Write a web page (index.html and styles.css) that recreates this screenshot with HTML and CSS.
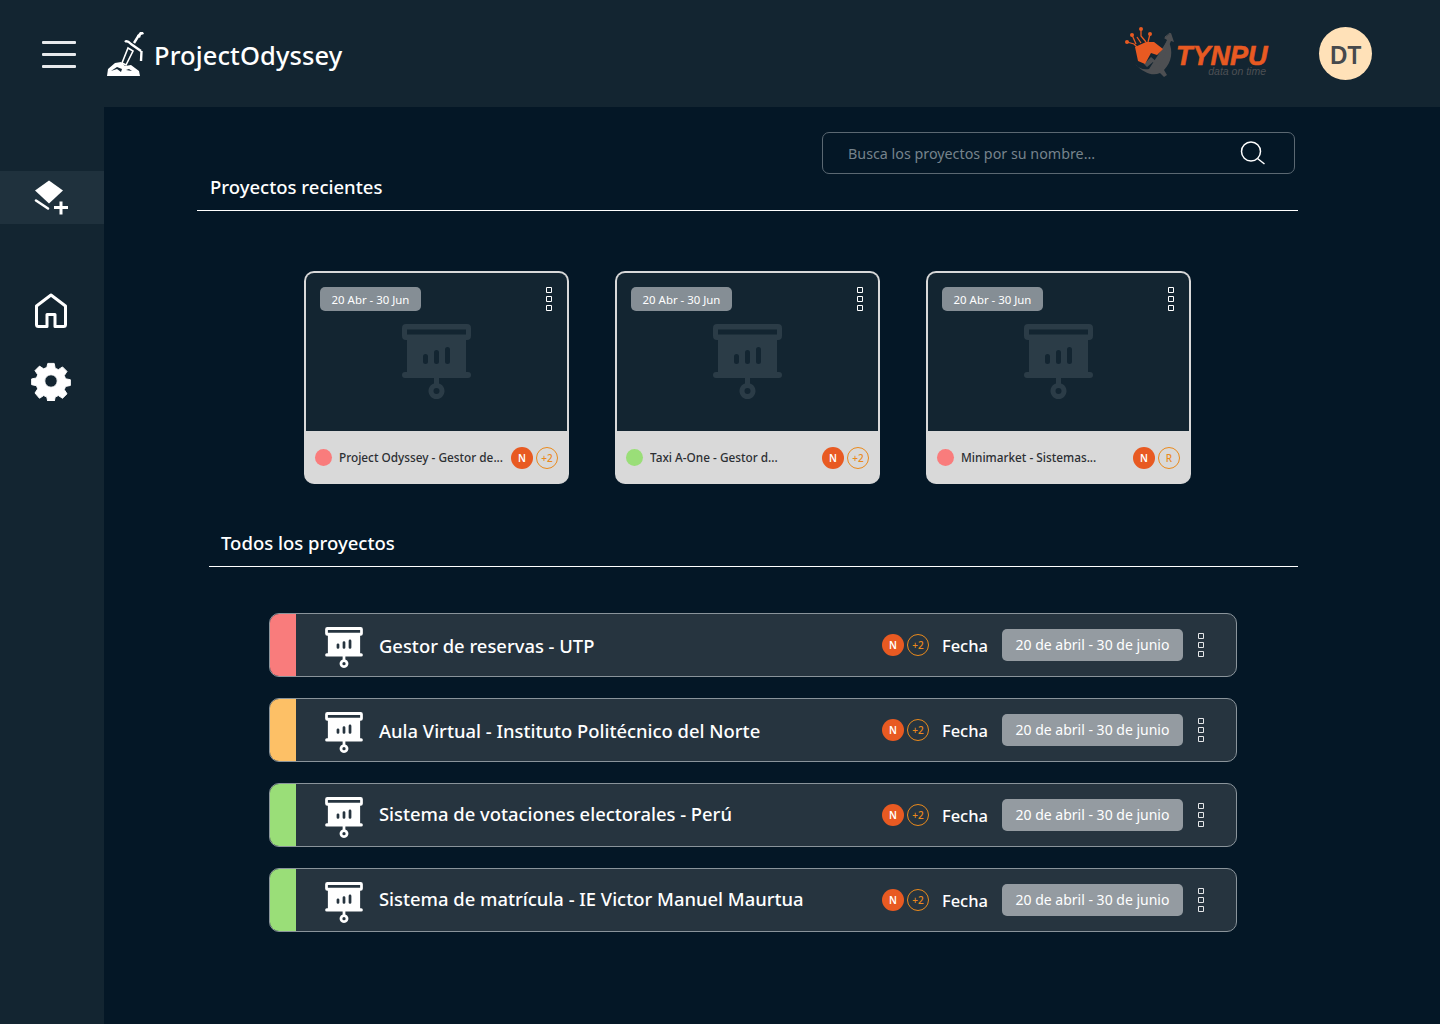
FILE: index.html
```html
<!DOCTYPE html>
<html lang="es">

<head>
    <meta charset="UTF-8">
    <meta name="viewport" content="width=device-width, initial-scale=1.0">
    <title>ProjectOdyssey</title>
    <link rel="stylesheet" href="styles.css">
</head>

<body>
    <svg class="defs" width="0" height="0">
        <defs>
            <symbol id="board" viewBox="0 0 69 75">
                <path fill-rule="evenodd" d="M4 0h61a4 4 0 0 1 4 4v8a4 4 0 0 1-4 4h-1v32h2a3 3 0 0 1 0 6H37v5.400a8 8 0 1 1-5 0V54H3a3 3 0 0 1 0-6h2V16H4a4 4 0 0 1-4-4V4a4 4 0 0 1 4-4zM5 5.500v5h59v-5zM34.500 64a3 3 0 1 0 0 6 3 3 0 0 0 0-6zM23.500 30a2.500 2.500 0 0 0-2.500 2.500v5a2.500 2.500 0 0 0 5 0v-5a2.500 2.500 0 0 0-2.500-2.500zM34.500 26a2.500 2.500 0 0 0-2.500 2.500v9a2.500 2.500 0 0 0 5 0v-9a2.500 2.500 0 0 0-2.500-2.500zM45.500 23a2.500 2.500 0 0 0-2.500 2.500v12a2.500 2.500 0 0 0 5 0v-12a2.500 2.500 0 0 0-2.500-2.500z"/>
            </symbol>
            <symbol id="dots" viewBox="0 0 6 24">
                <path fill="none" stroke="currentColor" d="M.5.500h5v5h-5zM.5 9.500h5v5h-5zM.5 18.500h5v5h-5z"/>
            </symbol>
        </defs>
    </svg>

    <header class="topbar">
        <div class="menu-btn"><span></span><span></span><span></span></div>
        <svg class="brand-icon" width="38" height="45" viewBox="5 7 38 45">
            <path fill="#fff" d="M6 51l1-7 7-6 6-1 4 4 6-1 8 6 1 5zM10 46l6-2 4 3 1-3-5-2zM25 45l6 1-3-2z" fill-rule="evenodd"/>
            <path fill="none" stroke="#fff" stroke-width="1.600" d="M27 23l5 3-7 14-4-2z"/>
            <path fill="none" stroke="#132531" stroke-width="1" d="M28 27l-4 9"/>
            <path fill="none" stroke="#fff" stroke-width="2.400" d="M24 17c2-2 4 0 6 2l10 7M33 18l5-8M40.500 26l-.5 10"/>
            <path fill="#fff" d="M36 11l3-4h3l1 2-3 1-1 3z"/>
        </svg>
        <span class="brand-name">ProjectOdyssey</span>
        <div class="tynpu">
            <svg width="56" height="60" viewBox="0 0 56 60">
                <path fill="#4d4f52" d="M15 42c3 4 8 6 14 5l18-28 3 1-1 0c4 9 3 20-5 28l3 5-3 2-4-4c-7 3-15 1-25-9z"/>
                <path fill="#4d4f52" d="M24 42l7-7 6 5 10-22-3-2 7-5 3 9-3-1-12 26-6-5-6 5z"/>
                <path fill="none" stroke="#4d4f52" d="M45 15l5-4 2 8"/>
                <path fill="#e85a22" d="M15 25l11-5h8l9 7-6 6-6-2-6 11-7-3z"/>
                <path fill="none" stroke="#e85a22" stroke-width="1.300" d="M7 20l7 2 4 4M12 13l4 9M21 7v7l5 6M30 12l-2 8M17 15l4 6"/>
                <circle fill="#e85a22" cx="7" cy="20" r="2"/>
                <circle fill="#e85a22" cx="12" cy="13" r="2"/>
                <circle fill="#e85a22" cx="21" cy="7" r="2"/>
                <circle fill="#e85a22" cx="30" cy="12" r="2"/>
            </svg>
            <div class="tynpu-text">
                <strong>TYNPU</strong>
                <small>data on time</small>
            </div>
        </div>
        <div class="avatar">DT</div>
    </header>

    <div class="layout">
        <nav class="sidebar">
            <div class="nav-item nav-new">
                <svg width="36" height="36" viewBox="0 0 36 36">
                    <path fill="#fff" d="M16 .5l14 10-14 13-14-13z"/>
                    <path fill="none" stroke="#fff" stroke-width="2.600" stroke-linecap="round" d="M3 20.500l12 8"/>
                    <path fill="none" stroke="#fff" stroke-width="3" d="M28 21.500v13M21 27.500h14"/>
                </svg>
            </div>
            <div class="nav-item nav-home">
                <svg width="34" height="37" viewBox="0 0 34 37">
                    <path fill="none" stroke="#fff" stroke-width="3" stroke-linejoin="round" d="M2.500 14L17 3l14.500 11v18.500a2 2 0 0 1-2 2H21V22.500h-8v12H4.500a2 2 0 0 1-2-2z"/>
                </svg>
            </div>
            <div class="nav-item nav-gear">
                <svg width="40" height="40" viewBox="-.5 -.5 25 25">
                    <path fill="#fff" stroke="#fff" stroke-width=".6" stroke-linejoin="round" fill-rule="evenodd" d="M10 1h4l.6 3 2 .9 2.600-1.700 2.800 2.800-1.700 2.600.8 2 3 .6v3.600l-3 .6-.8 2 1.700 2.600-2.800 2.800-2.600-1.700-2 .9-.6 3h-4l-.6-3-2-.9-2.600 1.700L2 19.500l1.700-2.600-.8-2-3-.6v-3.600l3-.6.8-2L2 5.500 4.800 2.700l2.600 1.700 2-.9zM12 8.100a3.900 3.900 0 1 0 0 7.800 3.900 3.900 0 0 0 0-7.800z"/>
                </svg>
            </div>
        </nav>

        <main class="content">
            <div class="search">
                <span>Busca los proyectos por su nombre...</span>
                <svg width="26" height="24" viewBox="0 0 26 24">
                    <circle cx="11" cy="10.500" r="9.500" fill="none" stroke="#fff" stroke-width="1.500"/>
                    <path stroke="#fff" stroke-width="1.500" d="M17.500 17.500l7 5.500"/>
                </svg>
            </div>

            <h2 class="section-title recent-title">Proyectos recientes</h2>

            <div class="cards">
                <article class="card">
                    <div class="card-top">
                        <span class="card-date">20 Abr - 30 Jun</span>
                        <svg class="dots"><use href="#dots"/></svg>
                        <svg class="card-board"><use href="#board"/></svg>
                    </div>
                    <div class="card-foot">
                        <i class="dot red"></i>
                        <span class="card-name">Project Odyssey - Gestor de...</span>
                        <span class="badge">N</span>
                        <span class="badge outline">+2</span>
                    </div>
                </article>
                <article class="card">
                    <div class="card-top">
                        <span class="card-date">20 Abr - 30 Jun</span>
                        <svg class="dots"><use href="#dots"/></svg>
                        <svg class="card-board"><use href="#board"/></svg>
                    </div>
                    <div class="card-foot">
                        <i class="dot green"></i>
                        <span class="card-name">Taxi A-One - Gestor d...</span>
                        <span class="badge">N</span>
                        <span class="badge outline">+2</span>
                    </div>
                </article>
                <article class="card">
                    <div class="card-top">
                        <span class="card-date">20 Abr - 30 Jun</span>
                        <svg class="dots"><use href="#dots"/></svg>
                        <svg class="card-board"><use href="#board"/></svg>
                    </div>
                    <div class="card-foot">
                        <i class="dot red"></i>
                        <span class="card-name">Minimarket - Sistemas...</span>
                        <span class="badge">N</span>
                        <span class="badge outline">R</span>
                    </div>
                </article>
            </div>

            <h2 class="section-title all-title">Todos los proyectos</h2>

            <div class="rows">
                <article class="row">
                    <i class="row-color red"></i>
                    <svg class="row-board"><use href="#board"/></svg>
                    <span class="row-name">Gestor de reservas - UTP</span>
                    <span class="badge">N</span>
                    <span class="badge outline">+2</span>
                    <span class="row-label">Fecha</span>
                    <span class="row-date">20 de abril - 30 de junio</span>
                    <svg class="dots"><use href="#dots"/></svg>
                </article>
                <article class="row">
                    <i class="row-color yellow"></i>
                    <svg class="row-board"><use href="#board"/></svg>
                    <span class="row-name">Aula Virtual - Instituto Politécnico del Norte</span>
                    <span class="badge">N</span>
                    <span class="badge outline">+2</span>
                    <span class="row-label">Fecha</span>
                    <span class="row-date">20 de abril - 30 de junio</span>
                    <svg class="dots"><use href="#dots"/></svg>
                </article>
                <article class="row">
                    <i class="row-color green"></i>
                    <svg class="row-board"><use href="#board"/></svg>
                    <span class="row-name">Sistema de votaciones electorales - Perú</span>
                    <span class="badge">N</span>
                    <span class="badge outline">+2</span>
                    <span class="row-label">Fecha</span>
                    <span class="row-date">20 de abril - 30 de junio</span>
                    <svg class="dots"><use href="#dots"/></svg>
                </article>
                <article class="row">
                    <i class="row-color green"></i>
                    <svg class="row-board"><use href="#board"/></svg>
                    <span class="row-name">Sistema de matrícula - IE Victor Manuel Maurtua</span>
                    <span class="badge">N</span>
                    <span class="badge outline">+2</span>
                    <span class="row-label">Fecha</span>
                    <span class="row-date">20 de abril - 30 de junio</span>
                    <svg class="dots"><use href="#dots"/></svg>
                </article>
            </div>
        </main>
    </div>
</body>

</html>
```

FILE: styles.css
```css
* {
    box-sizing: border-box;
}

html,
body {
    margin: 0;
    height: 1024px;
    overflow: hidden;
}

body {
    background-color: #041726;
    color: #fff;
    font-family: "Noto Sans", "Open Sans", sans-serif;
}

.defs {
    display: block;
    height: 0;
}

.topbar {
    display: flex;
    align-items: center;
    height: 107px;
    padding: 0 68px 0 42px;
    background-color: #132531;
}

.menu-btn {
    display: flex;
    flex-direction: column;
    gap: 9px;
    width: 34px;
    margin-right: 30px;
    margin-top: 1px;
}

.menu-btn span {
    height: 3px;
    background-color: #e8eaec;
    border-radius: 1px;
}

.brand-icon {
    margin-top: 1px;
}

.brand-name {
    margin-left: 10px;
    margin-top: 2px;
    font-size: 25.500px;
    font-weight: 500;
    letter-spacing: 0.1px;
}

.tynpu {
    display: flex;
    align-items: flex-start;
    margin-left: auto;
    margin-top: -3px;
}

.tynpu-text {
    display: flex;
    flex-direction: column;
    width: 93px;
    margin-top: 24px;
    font-family: "Liberation Sans", sans-serif;
    font-style: italic;
}

.tynpu-text strong {
    color: #e85a22;
    font-size: 27px;
    font-weight: 700;
    line-height: 20px;
    -webkit-text-stroke: 0.6px #e85a22;
}

.tynpu-text small {
    align-self: flex-end;
    margin-top: 1px;
    margin-right: 3px;
    color: #4d5054;
    font-size: 10.500px;
    line-height: 9px;
}

.avatar {
    display: flex;
    align-items: center;
    justify-content: center;
    width: 53px;
    height: 53px;
    margin-left: 50px;
    border-radius: 50%;
    background-color: #ffe1b8;
    color: #47494c;
    font-size: 25px;
    font-weight: 600;
}

.layout {
    display: flex;
    height: 917px;
}

.sidebar {
    width: 104px;
    flex-shrink: 0;
    padding-top: 64px;
    background-color: #132531;
}

.nav-item {
    display: flex;
    justify-content: center;
    padding-right: 2px;
}

.nav-item svg {
    display: block;
}

.nav-new {
    align-items: center;
    height: 53px;
    background-color: #1f313d;
}

.nav-home {
    margin-top: 68px;
}

.nav-gear {
    margin-top: 32px;
}

.content {
    flex: 1;
    padding: 25px 142px 0 93px;
}

.search {
    display: flex;
    align-items: center;
    justify-content: space-between;
    width: 473px;
    height: 42px;
    margin-left: 625px;
    padding: 0 28px 0 25px;
    border: 1px solid #5b6872;
    border-radius: 7px;
    color: #76838c;
    font-size: 14.300px;
}

.section-title {
    margin: 0;
    border-bottom: 1px solid #fff;
    font-size: 18.500px;
    font-weight: 500;
    line-height: 26px;
}

.recent-title {
    height: 37px;
    padding-left: 13px;
}

.all-title {
    height: 37px;
    margin-top: 46px;
    margin-left: 12px;
    padding-left: 12px;
}

.cards {
    display: flex;
    gap: 46px;
    margin-top: 60px;
    margin-left: 107px;
}

.card {
    width: 265px;
    height: 213px;
    overflow: hidden;
    border: 2px solid #d9d9d9;
    border-bottom: 0;
    border-radius: 10px;
    background-color: #d9d9d9;
}

.card-top {
    position: relative;
    height: 158px;
    background-color: #132531;
}

.card-date {
    position: absolute;
    top: 14px;
    left: 14px;
    width: 101px;
    height: 24px;
    border-radius: 5px;
    background-color: #858e95;
    font-size: 11.400px;
    line-height: 26px;
    text-align: center;
}

.card-top .dots {
    position: absolute;
    top: 14px;
    right: 15px;
    width: 6px;
    height: 24px;
    color: #fff;
}

.card-board {
    position: absolute;
    top: 51px;
    left: 96px;
    width: 69px;
    height: 75px;
    fill: #2b3c47;
}

.card-foot {
    display: flex;
    align-items: center;
    height: 53px;
    padding: 0 9px;
    color: #2c2f33;
}

.dot {
    width: 17px;
    height: 17px;
    margin-right: 7px;
    border-radius: 50%;
    flex-shrink: 0;
}

.card-name {
    flex: 1;
    margin-bottom: 2px;
    overflow: hidden;
    font-size: 11.800px;
    font-weight: 500;
    white-space: nowrap;
}

.badge {
    display: flex;
    align-items: center;
    justify-content: center;
    width: 22px;
    height: 22px;
    flex-shrink: 0;
    border-radius: 50%;
    background-color: #e85a22;
    color: #fff;
    font-size: 10px;
    font-weight: 600;
}

.badge.outline {
    margin-left: 3px;
    border: 1px solid #ea8a1c;
    background-color: transparent;
    color: #ea8a1c;
    font-weight: 500;
}

.rows {
    display: flex;
    flex-direction: column;
    gap: 21px;
    margin-top: 46px;
    margin-left: 72px;
    width: 968px;
}

.row {
    display: flex;
    align-items: center;
    height: 64px;
    padding-right: 32px;
    overflow: hidden;
    border: 1px solid #8a949b;
    border-radius: 10px;
    background-color: #26343f;
}

.row-color {
    align-self: stretch;
    width: 27px;
    margin: -1px 0 -1px -1px;
    flex-shrink: 0;
}

.row-board {
    width: 38px;
    height: 41px;
    margin: 5px 16px 0 29px;
    flex-shrink: 0;
    fill: #fff;
}

.row-name {
    flex: 1;
    font-size: 18.400px;
    font-weight: 500;
    white-space: nowrap;
}

.row:nth-child(n+3) .row-name {
    margin-bottom: 4px;
}

.row-label {
    margin-left: 13px;
    font-size: 16.500px;
    font-weight: 500;
}

.row-date {
    width: 181px;
    height: 32px;
    margin-left: 14px;
    margin-right: 15px;
    border-radius: 5px;
    background-color: #949ba1;
    font-size: 14px;
    line-height: 32px;
    text-align: center;
}

.row .dots {
    width: 6px;
    height: 24px;
    flex-shrink: 0;
    color: #e4e6e8;
}

.red {
    background-color: #f97c7c;
}

.yellow {
    background-color: #fdc066;
}

.green {
    background-color: #9ade78;
}
```
